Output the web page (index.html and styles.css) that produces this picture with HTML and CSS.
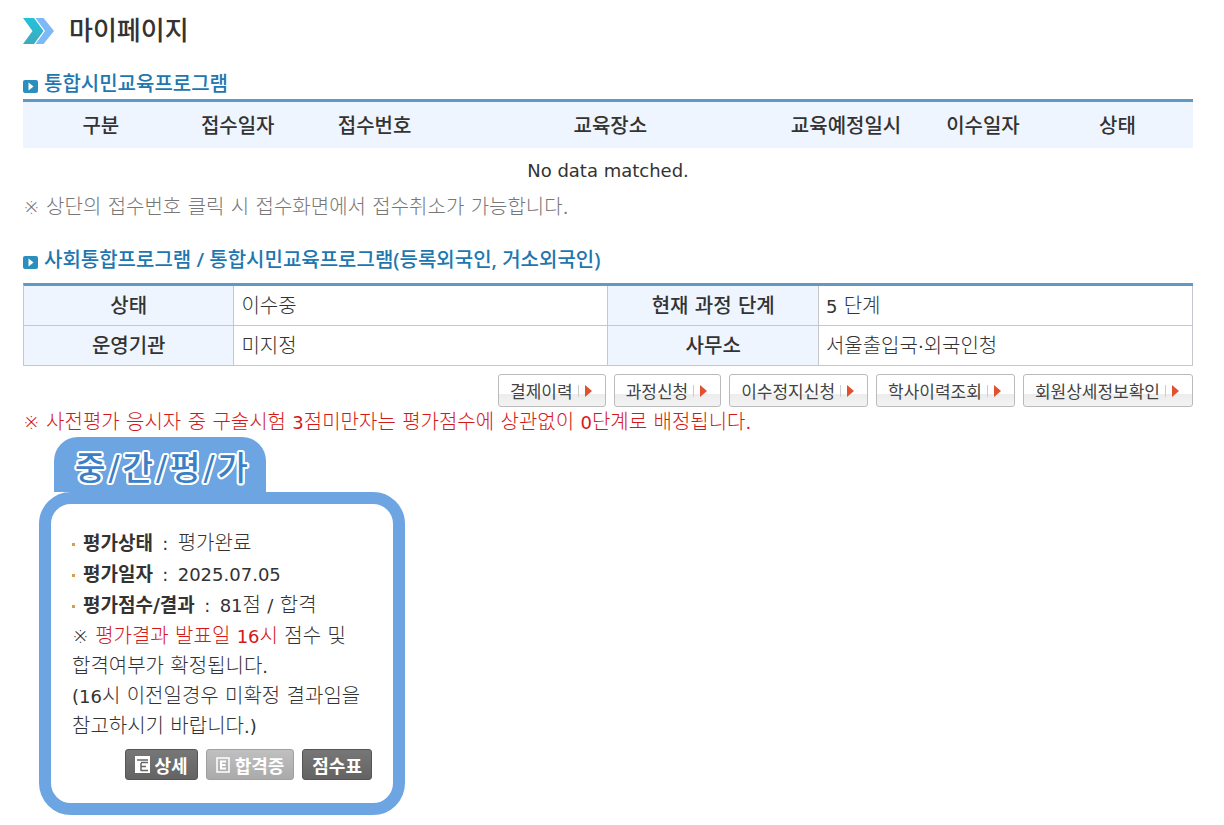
FILE: index.html
```html
<!DOCTYPE html>
<html lang="ko">
<head>
<meta charset="utf-8">
<title>마이페이지</title>
<link rel="stylesheet" href="styles.css">
</head>
<body>
<main class="page">
  <header class="page-head">
    <svg class="page-icon" width="32" height="28" viewBox="0 0 32 28" aria-hidden="true">
      <defs><linearGradient id="teal" x1="0" y1="0" x2="0" y2="1"><stop offset="0" stop-color="#22c3dc"/><stop offset="1" stop-color="#3ea9bb"/></linearGradient></defs>
      <path d="M0 1h11l9.500 13L11 27H0l9.500-13z" fill="url(#teal)"/>
      <path d="M12.500 1h8L31 14l-10.500 13h-8L22 14z" fill="#7cb9f6"/>
    </svg>
    <h1 class="page-title">마이페이지</h1>
  </header>

  <section class="programs">
    <h2 class="section-title">
      <svg class="section-icon" width="15" height="13" viewBox="0 0 15 13" aria-hidden="true"><rect width="15" height="13" rx="2" fill="#2b8fbd"/><path d="M5.500 2.500l5 4-5 4z" fill="#fff"/></svg>통합시민교육프로그램
    </h2>
    <table class="program-table">
      <colgroup><col class="col-wide"><col class="col-date"><col class="col-wide"><col class="col-place"><col class="col-wide"><col class="col-date"><col></colgroup>
      <thead>
        <tr><th scope="col">구분</th><th scope="col">접수일자</th><th scope="col">접수번호</th><th scope="col">교육장소</th><th scope="col">교육예정일시</th><th scope="col">이수일자</th><th scope="col">상태</th></tr>
      </thead>
      <tbody><tr><td class="empty" colspan="7">No data matched.</td></tr></tbody>
    </table>
    <p class="note">※ 상단의 접수번호 클릭 시 접수화면에서 접수취소가 가능합니다<span class="num">.</span></p>
  </section>

  <section class="social">
    <h2 class="section-title">
      <svg class="section-icon" width="15" height="13" viewBox="0 0 15 13" aria-hidden="true"><rect width="15" height="13" rx="2" fill="#2b8fbd"/><path d="M5.500 2.500l5 4-5 4z" fill="#fff"/></svg>사회통합프로그램 / 통합시민교육프로그램(등록외국인, 거소외국인)
    </h2>
    <table class="status-table">
      <colgroup><col class="col-label"><col class="col-value"><col class="col-label"><col class="col-value"></colgroup>
      <tbody>
        <tr><th scope="row">상태</th><td>이수중</td><th scope="row">현재 과정 단계</th><td><span class="num">5</span> 단계</td></tr>
        <tr><th scope="row">운영기관</th><td>미지정</td><th scope="row">사무소</th><td>서울출입국<span class="num">·</span>외국인청</td></tr>
      </tbody>
    </table>
    <div class="actions">
      <button class="action" type="button">결제이력</button>
      <button class="action" type="button">과정신청</button>
      <button class="action" type="button">이수정지신청</button>
      <button class="action" type="button">학사이력조회</button>
      <button class="action" type="button">회원상세정보확인</button>
    </div>
    <p class="note note-alert">※ 사전평가 응시자 중 구술시험 <span class="num">3</span>점미만자는 평가점수에 상관없이 <span class="num">0</span>단계로 배정됩니다<span class="num">.</span></p>
  </section>

  <section class="exam">
    <h3 class="exam-tab">중<span class="slash">/</span>간<span class="slash">/</span>평<span class="slash">/</span>가</h3>
    <div class="exam-card">
      <ul class="facts">
        <li><b>평가상태</b> <span class="num colon">:</span> 평가완료</li>
        <li><b>평가일자</b> <span class="num colon">:</span> <span class="num">2025.07.05</span></li>
        <li><b>평가점수/결과</b> <span class="num colon">:</span> <span class="num">81</span>점 <span class="num">/</span> 합격</li>
      </ul>
      <p class="exam-note">※ <em>평가결과 발표일 <span class="num">16</span>시</em> 점수 및<br>합격여부가 확정됩니다<span class="num">.</span><br><span class="num">(16</span>시 이전일경우 미확정 결과임을<br>참고하시기 바랍니다<span class="num">.)</span></p>
      <div class="exam-actions">
        <button class="chip" type="button"><svg width="15" height="17" viewBox="0 0 15 17" aria-hidden="true"><path d="M0 0h15v17H0z" fill="#fff"/><path d="M2 4h11M6 6.500h7M6 7v8M6 10.500h5M6 14.500h7" stroke="#666" stroke-width="1.500" fill="none"/></svg>상세</button>
        <button class="chip chip-off" type="button" disabled><svg width="14" height="16" viewBox="0 0 14 16" aria-hidden="true"><path d="M1 1h12v14H1z" fill="none" stroke="#fff" stroke-width="1.500"/><path d="M10 4.500H5v7h5M5 8h4.500" stroke="#fff" stroke-width="2" fill="none"/></svg>합격증</button>
        <button class="chip" type="button">점수표</button>
      </div>
    </div>
  </section>
</main>
</body>
</html>
```

FILE: styles.css
```css
* { box-sizing: border-box; }

body {
  margin: 0;
  background: #fff;
  color: #333;
  font-family: "DejaVu Sans", "Noto Sans CJK KR", sans-serif;
  font-size: 20px;
  font-weight: 300;
  line-height: 30px;
}

h1, h2, h3, p, ul { margin: 0; padding: 0; }
button { font-family: inherit; cursor: pointer; }
.page { padding: 10px 31px 10px 23px; }

.page-head { display: flex; align-items: center; gap: 14px; height: 42px; }
.page-title { font-size: 26px; font-weight: 500; line-height: 42px; color: #333; }

.section-title {
  display: flex;
  align-items: center;
  gap: 6px;
  color: #2077b0;
  font-family: "Noto Sans", "Noto Sans CJK KR", sans-serif;
  font-size: 20px;
  font-weight: 500;
}
.section-icon { flex: none; margin-top: 4px; }
.programs { padding-top: 17px; }
.social { padding-top: 23px; }

table { width: 100%; table-layout: fixed; border-collapse: separate; border-spacing: 0; border-top: 3px solid #6298c4; }
th { padding: 0; background: #eef5fe; font-weight: 500; text-align: center; }

.program-table th { height: 46px; padding-top: 2px; }
.col-wide { width: 13.3%; }
.col-date { width: 10.1%; }
.col-place { width: 27%; }
.empty {
  height: 44px;
  padding: 2px 0 0;
  font-size: 18px;
  font-weight: 400;
  text-align: center;
}

.status-table {
  margin-top: 8px;
  border-left: 1px solid #c4c8cc;
}
.status-table th, .status-table td {
  height: 40px;
  border-right: 1px solid #c4c8cc;
  border-bottom: 1px solid #c4c8cc;
}
.status-table td { padding: 0 7px; }
.col-label { width: 18%; }
.col-value { width: 32%; }

.num { font-size: 18px; font-weight: 400; line-height: 1; }

.note { color: #777; }
.note-alert { color: #d41818; }

.actions { display: flex; flex-wrap: wrap; justify-content: flex-end; gap: 8px; padding-top: 8px; }
.action {
  display: flex;
  align-items: center;
  height: 33px;
  padding: 0 13px 0 11px;
  border: 1px solid #bbb;
  border-radius: 3px;
  background: linear-gradient(#fff 60%, #ececec 60%, #f3f3f3);
  color: #444;
  font-size: 17px;
  font-weight: 400;
}
.action::before { content: ""; order: 1; width: 1px; height: 12px; margin: 0 6px 0 5px; background: #ccc; }
.action::after {
  content: "";
  order: 2;
  border: 6px solid transparent;
  border-left: 7px solid #e2512f;
  border-right: 0;
}

.exam { width: fit-content; padding-left: 16px; }
.exam-tab {
  width: fit-content;
  height: 55px;
  margin-left: 15px;
  padding: 0 18px 0 21px;
  border-radius: 24px 24px 0 0;
  background: #6ca5e2;
  color: #3b80c6;
  font-size: 33px;
  font-weight: 500;
  line-height: 64px;
  text-shadow: 2px 0 #fff, -2px 0 #fff, 0 2px #fff, 0 -2px #fff, 1px 2px #fff, -1px 2px #fff, 1px -2px #fff, -1px -2px #fff, 2px 1px #fff, -2px 1px #fff, 2px -1px #fff, -2px -1px #fff;
}
.slash { padding: 0 3px; }
.exam-card {
  min-width: 366px;
  padding: 24px 21px 23px;
  border: 12px solid #6ca5e2;
  border-radius: 32px;
}
.facts { list-style: none; }
.facts li { line-height: 31px; }
.facts li::before {
  content: "";
  display: inline-block;
  width: 3px;
  height: 3px;
  margin-right: 8px;
  background: #d0a050;
  vertical-align: middle;
}
.facts b { font-size: 19px; font-weight: 700; line-height: 1; }
.colon { padding: 0 3px; }
.exam-note em { color: #d41818; font-style: normal; }
.exam-actions { display: flex; justify-content: flex-end; gap: 8px; padding-top: 8px; }
.chip {
  display: flex;
  align-items: center;
  gap: 5px;
  height: 31px;
  padding: 0 9px;
  border: 1px solid #555;
  border-radius: 3px;
  background: linear-gradient(#777, #636363);
  color: #fff;
  font-size: 18px;
  font-weight: 700;
}
.chip-off { border-color: #a0a0a0; background: linear-gradient(#c0c0c0, #aaa); }
```
